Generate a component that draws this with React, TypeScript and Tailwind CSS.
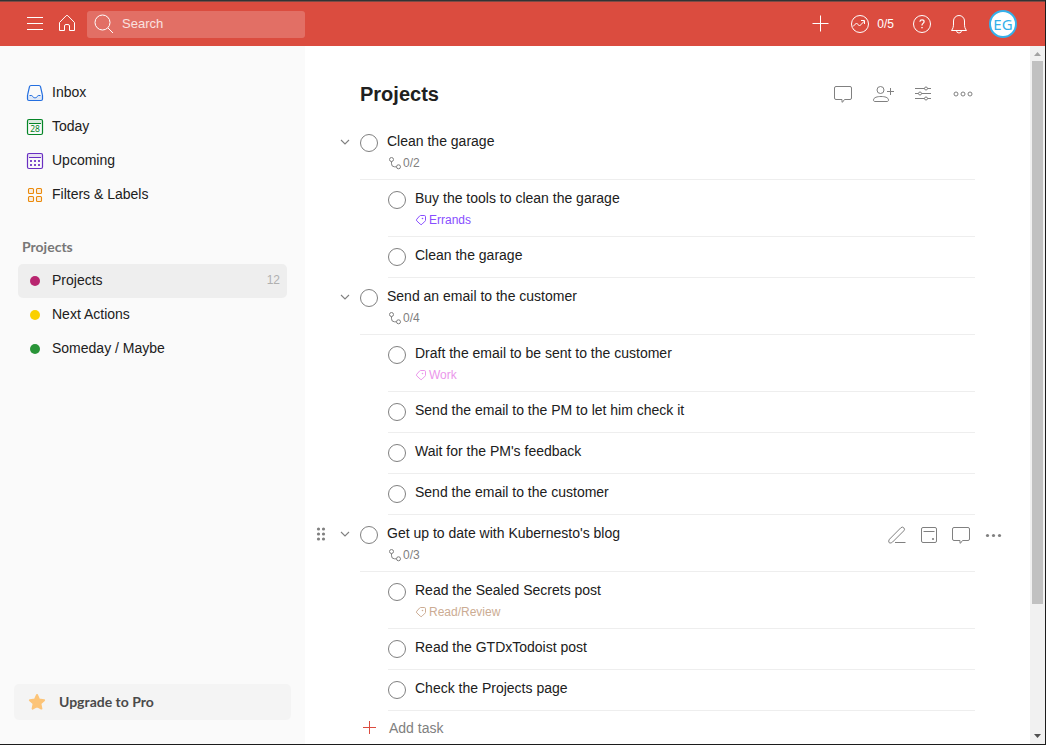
import type { ReactNode } from "react";

type Task = {
  id: string;
  title: string;
  level: 0 | 1;
  count?: string;
  label?: { name: string; color: string };
  active?: boolean;
};

const TASKS: Task[] = [
  { id: "t1", title: "Clean the garage", level: 0, count: "0/2" },
  { id: "t2", title: "Buy the tools to clean the garage", level: 1, label: { name: "Errands", color: "text-[#884dff]" } },
  { id: "t3", title: "Clean the garage", level: 1 },
  { id: "t4", title: "Send an email to the customer", level: 0, count: "0/4" },
  { id: "t5", title: "Draft the email to be sent to the customer", level: 1, label: { name: "Work", color: "text-[#eb96eb]" } },
  { id: "t6", title: "Send the email to the PM to let him check it", level: 1 },
  { id: "t7", title: "Wait for the PM's feedback", level: 1 },
  { id: "t8", title: "Send the email to the customer", level: 1 },
  { id: "t9", title: "Get up to date with Kubernesto's blog", level: 0, count: "0/3", active: true },
  { id: "t10", title: "Read the Sealed Secrets post", level: 1, label: { name: "Read/Review", color: "text-[#ccac93]" } },
  { id: "t11", title: "Read the GTDxTodoist post", level: 1 },
  { id: "t12", title: "Check the Projects page", level: 1 },
];

function Icon({ children, className = "size-6" }: { children: ReactNode; className?: string }) {
  return (
    <svg viewBox="0 0 24 24" className={`shrink-0 ${className}`} fill="none" stroke="currentColor" strokeWidth="1" aria-hidden="true">
      {children}
    </svg>
  );
}

function IconButton({ label, children, className = "" }: { label: string; children: ReactNode; className?: string }) {
  return (
    <button type="button" aria-label={label} className={`flex size-6 shrink-0 items-center justify-center ${className}`}>
      {children}
    </button>
  );
}

const CommentIcon = () => (
  <Icon>
    <path d="M5 4.500h14a1.500 1.500 0 0 1 1.500 1.500v10a1.500 1.500 0 0 1-1.500 1.500h-5.500l-2 2.700h-.5v-2.700H5A1.500 1.500 0 0 1 3.500 16V6A1.500 1.500 0 0 1 5 4.500z" />
  </Icon>
);

const InboxIcon = () => (
  <Icon className="size-6 text-[#246fe0]">
    <path d="M5 14.500h3.700c.4 0 .6.300.8.700.4 1 1.300 1.800 2.500 1.800s2.100-.8 2.500-1.800c.2-.4.400-.7.800-.7H19v5H5z" fill="#246fe0" fillOpacity=".12" stroke="none" />
    <path d="M8 4.500h8c.7 0 1.300.4 1.500 1.100l1.900 8.400c.1.200.1.400.1.600v3.400a1.500 1.500 0 0 1-1.500 1.500H6a1.500 1.500 0 0 1-1.500-1.500v-3.400c0-.2 0-.4.1-.6l1.900-8.400c.2-.7.800-1.100 1.500-1.100z" strokeWidth="1.200" />
    <path d="M6.500 14.500h2.200c.4 0 .6.300.8.700.4 1 1.300 1.600 2.500 1.600s2.100-.6 2.500-1.600c.2-.4.4-.7.8-.7h2.200" />
  </Icon>
);

const TodayIcon = () => (
  <Icon className="size-6 text-[#058527]">
    <rect x="4" y="4.500" width="16" height="4" fill="currentColor" fillOpacity=".12" stroke="none" />
    <rect x="4.500" y="4.500" width="15" height="15" rx="1.500" strokeWidth="1.200" />
    <path d="M6 8.500h12" />
    <text x="12" y="17.300" textAnchor="middle" fontSize="8.500" fill="currentColor" stroke="none" className="font-['Noto_Sans',sans-serif]">28</text>
  </Icon>
);

const UpcomingIcon = () => (
  <Icon className="size-6 text-[#692fc2]">
    <rect x="4" y="4.500" width="16" height="4" fill="currentColor" fillOpacity=".12" stroke="none" />
    <rect x="4.500" y="4.500" width="15" height="15" rx="1.500" strokeWidth="1.200" />
    <path d="M6 8.500h12" />
    <path d="M7 12h2m2 0h2m2 0h2M7 16h2m2 0h2m2 0h2" strokeWidth="2" strokeOpacity=".85" />
  </Icon>
);

const FiltersIcon = () => (
  <Icon className="size-6 text-[#eb8909]">
    <g fill="#eb8909" fillOpacity=".1" strokeWidth="1.100">
      <rect x="5.500" y="5.500" width="5" height="5" rx="1" />
      <rect x="13.500" y="5.500" width="5" height="5" rx="1" />
      <rect x="5.500" y="13.500" width="5" height="5" rx="1" />
      <rect x="13.500" y="13.500" width="5" height="5" rx="1" />
    </g>
  </Icon>
);

const Dot = ({ className }: { className: string }) => (
  <span className="flex size-6 items-center justify-center">
    <span className={`size-[10px] rounded-full ${className}`} />
  </span>
);

function NavItem({
  icon,
  label,
  count,
  selected,
  className = "",
}: {
  icon: ReactNode;
  label: string;
  count?: string;
  selected?: boolean;
  className?: string;
}) {
  return (
    <li>
      <a
        href="#"
        aria-current={selected ? "page" : undefined}
        className={`flex h-[34px] items-center gap-[5px] rounded-[5px] pr-[7px] pl-[5px] ${selected ? "bg-[#eeeeee]" : ""} ${className}`}
      >
        <span className="pt-px">{icon}</span>
        <span className="flex-1 pb-px text-sm">{label}</span>
        {count && <span className="text-xs text-[#b0b0b0]">{count}</span>}
      </a>
    </li>
  );
}

function TopBar() {
  return (
    <header className="flex h-11 shrink-0 items-center bg-[#db4c3f] pr-7 pl-[23px] text-white">
      <div className="flex items-center gap-2">
        <IconButton label="Menu">
          <Icon><path d="M4 5.500h16M4 11.500h16M4 17.500h16" /></Icon>
        </IconButton>
        <IconButton label="Home">
          <Icon>
            <path d="M4.500 10.500 11.200 3.700a1.200 1.200 0 0 1 1.600 0l6.700 6.800v8h-5v-4.500a1.500 1.500 0 0 0-1.500-1.500h-2A1.500 1.500 0 0 0 9.500 14v4.500h-5z" />
          </Icon>
        </IconButton>
        <label className="flex h-[27px] w-[218px] items-center gap-[6px] rounded-[3px] bg-white/20 pl-[5px]">
          <Icon>
            <circle cx="10.500" cy="10.500" r="7.500" />
            <path d="m16 16 5 5" />
          </Icon>
          <input type="text" aria-label="Search" placeholder="Search" className="w-full min-w-0 bg-transparent text-[13px] text-white outline-none placeholder:text-white/80" />
        </label>
      </div>
      <div className="ml-auto flex items-center">
        <IconButton label="Quick add">
          <Icon><path d="M12.500 3.500v16M4.500 11.500h16" /></Icon>
        </IconButton>
        <button type="button" aria-label="Productivity" className="ml-4 flex items-center gap-[5px] text-xs">
          <Icon>
            <circle cx="12" cy="12" r="8.500" />
            <path d="m5 14.500 3.500-3.500 3 3 5-5M13 8.500h3.500V12" />
          </Icon>
          0/5
        </button>
        <IconButton label="Help" className="ml-4">
          <Icon>
            <circle cx="12" cy="12" r="8.500" />
            <path d="M9.900 9.800c.1-1.200 1-1.900 2.100-1.900 1.200 0 2.100.7 2.100 1.800 0 1.600-2.100 1.700-2.100 3.400v.4" strokeWidth="1.200" />
            <path d="M12 15v1.200" strokeWidth="1.400" />
          </Icon>
        </IconButton>
        <IconButton label="Notifications" className="ml-[13px]">
          <Icon>
            <path d="M4.500 18.500c1.600-2 2-4 2-6.500V9a5.500 5.500 0 0 1 11 0v3c0 2.500.4 4.500 2 6.500z" strokeLinejoin="round" />
            <path d="M9.500 18.500a2.500 2.500 0 0 0 5 0" />
          </Icon>
        </IconButton>
        <button
          type="button"
          aria-label="Account"
          className="ml-[18px] flex size-7 items-center justify-center rounded-full border-2 border-[#35b0ea] bg-white font-['Noto_Sans',sans-serif] text-[15px] text-[#35b0ea]"
        >
          EG
        </button>
      </div>
    </header>
  );
}

function Sidebar() {
  return (
    <aside className="flex w-[305px] shrink-0 flex-col bg-[#fafafa] pt-[29px]">
      <nav className="px-[18px]">
        <ul>
          <NavItem icon={<InboxIcon />} label="Inbox" />
          <NavItem icon={<TodayIcon />} label="Today" />
          <NavItem icon={<UpcomingIcon />} label="Upcoming" />
          <NavItem icon={<FiltersIcon />} label="Filters & Labels" />
        </ul>
        <h2 className="mt-[19px] flex h-[34px] items-center pl-1 font-[Lato,sans-serif] text-sm font-bold text-[#777777]">Projects</h2>
        <ul>
          <NavItem className="pb-[2px]" icon={<Dot className="bg-[#b8256f]" />} label="Projects" count="12" selected />
          <NavItem className="pb-[2px]" icon={<Dot className="bg-[#fad000]" />} label="Next Actions" />
          <NavItem className="pb-[2px]" icon={<Dot className="bg-[#299438]" />} label="Someday / Maybe" />
        </ul>
      </nav>
      <button
        type="button"
        className="mx-[14px] mt-auto mb-6 flex h-9 items-center gap-[10px] rounded-[5px] bg-[#f4f4f4] pl-[11px] font-[Lato,sans-serif] text-sm font-bold text-[#4a4a4a]"
      >
        <Icon>
          <path d="m12 5 2.100 4.600 5 .6-3.700 3.400 1 5L12 16.100l-4.400 2.500 1-5-3.700-3.400 5-.6z" fill="#fcc478" stroke="#fcc478" strokeWidth="2" strokeLinejoin="round" />
        </Icon>
        Upgrade to Pro
      </button>
    </aside>
  );
}

function TaskActions() {
  return (
    <div className="absolute top-2 right-[25px] flex gap-2 text-[#808080]">
      <IconButton label="Edit">
        <Icon>
          <path d="M4.200 19.700c-.8-.8-.5-2.500.3-3.500L15.800 4.800a2.100 2.100 0 0 1 3 3L7.500 19.100c-.9.800-2.500 1.200-3.300.6z" />
          <path d="M10 19.500h10.500" />
        </Icon>
      </IconButton>
      <IconButton label="Schedule">
        <Icon>
          <rect x="4.500" y="4.500" width="15" height="15" rx="1.500" />
          <path d="M6.500 8.500h11" />
          <circle cx="16" cy="16" r="1.100" fill="currentColor" stroke="none" />
        </Icon>
      </IconButton>
      <IconButton label="Comment"><CommentIcon /></IconButton>
      <IconButton label="More task actions">
        <Icon>
          <g fill="currentColor" stroke="none">
            <circle cx="6.500" cy="12.500" r="1.600" />
            <circle cx="12.500" cy="12.500" r="1.600" />
            <circle cx="18.500" cy="12.500" r="1.600" />
          </g>
        </Icon>
      </IconButton>
    </div>
  );
}

function TaskRow({ task }: { task: Task }) {
  return (
    <li className="relative flex pr-[55px]">
      <div className={`flex shrink-0 justify-end pt-[7px] pr-[3px] text-[#808080] ${task.level === 1 ? "w-[83px]" : "w-[55px]"}`}>
        {task.active && (
          <IconButton label="Drag">
            <Icon>
              <g fill="currentColor" stroke="none">
                <circle cx="9.500" cy="7" r="1.600" />
                <circle cx="14.500" cy="7" r="1.600" />
                <circle cx="9.500" cy="12" r="1.600" />
                <circle cx="14.500" cy="12" r="1.600" />
                <circle cx="9.500" cy="17" r="1.600" />
                <circle cx="14.500" cy="17" r="1.600" />
              </g>
            </Icon>
          </IconButton>
        )}
        {task.level === 0 && (
          <IconButton label="Collapse">
            <Icon><path d="m8 10 4 4 4-4" strokeWidth="1.100" /></Icon>
          </IconButton>
        )}
      </div>
      <div className="flex min-h-[41px] min-w-0 flex-1 gap-[9px] border-b border-[#eeeeee] pt-2 pb-2">
        <input
          id={task.id}
          type="checkbox"
          className="mt-[3px] size-[18px] shrink-0 appearance-none rounded-full border border-[#808080] checked:bg-[#808080]"
        />
        <div className="min-w-0">
          <label htmlFor={task.id} className="block text-sm">{task.title}</label>
          {task.count && (
            <p className="mt-1 flex items-center text-xs text-[#808080]">
              <svg viewBox="0 0 16 16" className="size-4" fill="none" stroke="currentColor" strokeWidth="1" aria-hidden="true">
                <circle cx="4.500" cy="4.500" r="2" />
                <circle cx="11.500" cy="11.800" r="2" />
                <path d="M4.500 6.500v2.300a3 3 0 0 0 3 3h2" />
              </svg>
              {task.count}
            </p>
          )}
          {task.label && (
            <p className={`mt-1 flex items-center gap-[2px] text-xs ${task.label.color}`}>
              <svg viewBox="0 0 12 12" className="size-3" fill="none" stroke="currentColor" strokeWidth="1" aria-hidden="true">
                <path d="M5.600 1.500h3.700a1.200 1.200 0 0 1 1.200 1.200v3.400c0 .4-.1.700-.4 1L7 10.200a1.200 1.200 0 0 1-1.700 0L1.800 6.900a1.200 1.200 0 0 1 0-1.700l2.900-3.300c.2-.3.600-.4.900-.4z" />
                <circle cx="7.500" cy="4.500" r=".8" fill="currentColor" stroke="none" />
              </svg>
              <a href="#">{task.label.name}</a>
            </p>
          )}
        </div>
      </div>
      {task.active && <TaskActions />}
    </li>
  );
}

function ProjectView() {
  return (
    <main className="min-w-0 flex-1 overflow-hidden bg-white">
      <div className="mb-[17px] flex items-center justify-between px-[55px] pt-9">
        <h1 className="text-xl leading-6 font-bold">Projects</h1>
        <div className="flex gap-4 text-[#808080]">
          <IconButton label="Comments"><CommentIcon /></IconButton>
          <IconButton label="Share">
            <Icon>
              <circle cx="9.500" cy="8" r="3.500" />
              <path d="M10 14.500c3.500 0 7.500.8 7.500 3.600 0 1-.7 1.400-1.500 1.400H4c-.8 0-1.500-.4-1.500-1.400 0-2.800 4-3.600 7.500-3.600z" />
              <path d="M19.500 6v7M16 9.500h7" />
            </Icon>
          </IconButton>
          <IconButton label="View">
            <Icon>
              <path d="M4 6.500h9.500m3 0H20M4 11.500h3.500m3 0H20M4 16.500h9.500m3 0H20" />
              <circle cx="15" cy="6.500" r="1.500" />
              <circle cx="9" cy="11.500" r="1.500" />
              <circle cx="15" cy="16.500" r="1.500" />
            </Icon>
          </IconButton>
          <IconButton label="More project actions">
            <Icon>
              <circle cx="5" cy="12" r="2" />
              <circle cx="12" cy="12" r="2" />
              <circle cx="19" cy="12" r="2" />
            </Icon>
          </IconButton>
        </div>
      </div>
      <ul>
        {TASKS.map((task) => (
          <TaskRow key={task.id} task={task} />
        ))}
      </ul>
      <button type="button" className="ml-[52px] flex h-[34px] items-center gap-2 text-sm text-[#808080]">
        <Icon className="size-6 text-[#db4c3f]"><path d="M12.500 5v13M6 11.500h13" /></Icon>
        Add task
      </button>
    </main>
  );
}

function ScrollTrack() {
  return (
    <div aria-hidden="true" className="flex w-[15px] shrink-0 flex-col items-center bg-[#f1f1f1]">
      <svg viewBox="0 0 15 15" className="size-[15px] shrink-0"><path d="M4 10h7L7.500 6z" fill="#a3a3a3" /></svg>
      <div className="min-h-0 w-full flex-1 px-[2px] pb-[125px]">
        <div className="h-full bg-[#c1c1c1]" />
      </div>
      <svg viewBox="0 0 15 15" className="size-[15px] shrink-0"><path d="M4 5h7L7.500 9z" fill="#505050" /></svg>
    </div>
  );
}

export default function App() {
  return (
    <div className="flex h-screen flex-col border-r border-b border-[#1c1c1c] bg-white font-['Liberation_Sans',Arial,sans-serif] text-[#202020]">
      <div className="h-[2px] shrink-0 border-t border-[#333333] bg-[#7d4a45]" />
      <TopBar />
      <div className="flex min-h-0 flex-1">
        <Sidebar />
        <ProjectView />
        <ScrollTrack />
      </div>
    </div>
  );
}
